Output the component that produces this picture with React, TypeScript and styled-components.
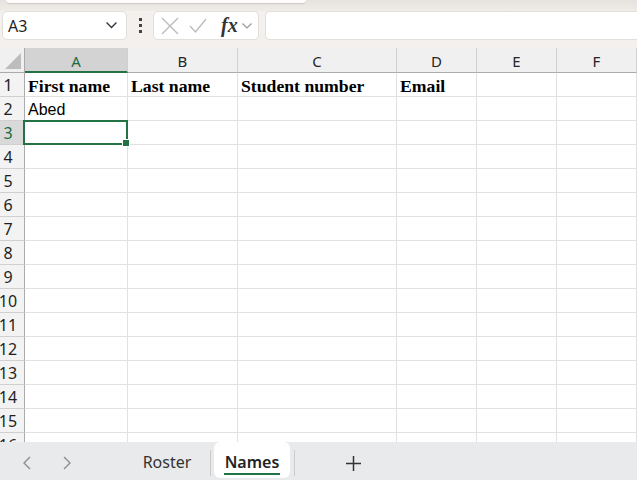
import React from 'react';
import styled, { createGlobalStyle } from 'styled-components';

const GlobalStyle = createGlobalStyle`
  html, body {
    margin: 0;
    padding: 0;
    background: #f3f0ed;
    overflow: hidden;
  }
  * {
    box-sizing: border-box;
  }
`;

const UI_FONT = `"Segoe UI", "Noto Sans", "Open Sans", sans-serif`;

const Page = styled.div`
  width: 637px;
  height: 480px;
  display: flex;
  flex-direction: column;
  font-family: ${UI_FONT};
  background: #f3f0ed;
  overflow: hidden;
`;

const TopStrip = styled.div`
  height: 11px;
  background: linear-gradient(#e6e2de, #efebe7);
  padding: 0 0 0 6px;
`;

const RibbonEdge = styled.div`
  width: 300px;
  height: 3px;
  background: #fdfcfb;
  border-radius: 0 0 4px 4px;
  box-shadow: 0 1px 1px rgba(0, 0, 0, 0.12);
`;

const FormulaBar = styled.div`
  height: 29px;
  display: flex;
  align-items: stretch;
  padding-left: 2px;
  margin-bottom: 8px;
`;

const NameBox = styled.div`
  width: 125px;
  background: #fff;
  border: 1px solid #e2deda;
  border-radius: 5px;
  display: flex;
  align-items: center;
  justify-content: space-between;
  padding: 0 9px 0 5px;
  font-size: 16px;
  color: #1f1f1f;
`;

const Dots = styled.div`
  width: 26px;
  display: flex;
  flex-direction: column;
  align-items: center;
  justify-content: center;
  gap: 3px;

  span {
    width: 3px;
    height: 3px;
    background: #444;
  }
`;

const FxBox = styled.div`
  width: 106px;
  background: #fff;
  border: 1px solid #e2deda;
  border-radius: 5px;
  display: flex;
  align-items: center;
  padding-left: 7px;
  gap: 10px;
`;

const FxLabel = styled.span`
  font-family: "Liberation Serif", "DejaVu Serif", serif;
  font-style: italic;
  font-weight: bold;
  font-size: 20px;
  color: #333;
  margin-left: 4px;
  margin-right: -6px;
`;

const FormulaInput = styled.div`
  flex: 1;
  margin-left: 6px;
  background: #fff;
  border: 1px solid #e2deda;
  border-right: none;
  border-radius: 5px 0 0 5px;
`;

const Sheet = styled.div`
  height: 394px;
  display: grid;
  grid-template-columns: 25px 103px 110px 159px 80px 80px 80px;
  grid-template-rows: 25px;
  grid-auto-rows: 24px;
  background: #fff;
  overflow: hidden;
  align-content: start;
`;

const Corner = styled.div`
  background: #f0f0f0;
  border-right: 1px solid #ababab;
  border-bottom: 1px solid #ababab;
  position: relative;

  &::after {
    content: '';
    position: absolute;
    right: 3px;
    bottom: 3px;
    width: 0;
    height: 0;
    border-left: 16px solid transparent;
    border-bottom: 16px solid #bdbdbd;
  }
`;

const ColHead = styled.div<{ $active?: boolean }>`
  background: ${(p) => (p.$active ? '#d3d3d3' : '#f0f0f0')};
  border-right: 1px solid #d0d0d0;
  border-bottom: ${(p) => (p.$active ? '2px solid #217346' : '1px solid #ababab')};
  display: flex;
  align-items: center;
  justify-content: center;
  padding-top: ${(p) => (p.$active ? '2px' : '1px')};
  font-size: 15px;
  color: ${(p) => (p.$active ? '#1c6b40' : '#262626')};
`;

const RowHead = styled.div<{ $active?: boolean }>`
  background: ${(p) => (p.$active ? '#d9d9d9' : '#f3f3f3')};
  border-right: ${(p) => (p.$active ? '2px solid #217346' : '1px solid #ababab')};
  border-bottom: 1px solid #d0d0d0;
  overflow: hidden;
  display: flex;
  align-items: center;
  padding-top: 1px;
  font-size: 16px;
  color: ${(p) => (p.$active ? '#1c6b40' : '#1f1f1f')};

  span {
    flex: none;
    width: 32px;
    margin-left: -8px;
    text-align: center;
  }
`;

const Cell = styled.div<{ $bold?: boolean; $selected?: boolean }>`
  position: relative;
  border-right: 1px solid #e1e1e1;
  border-bottom: 1px solid #e1e1e1;
  display: flex;
  align-items: center;
  padding: 3px 0 0 3px;
  white-space: nowrap;
  color: #000;
  font-family: ${(p) =>
    p.$bold ? '"Liberation Serif", "Times New Roman", serif' : '"Liberation Sans", Arial, sans-serif'};
  font-size: ${(p) => (p.$bold ? '17.7px' : '16px')};
  font-weight: ${(p) => (p.$bold ? 'bold' : 'normal')};

  ${(p) =>
    p.$selected &&
    `
    &::before {
      content: '';
      position: absolute;
      left: -2px;
      top: -1px;
      right: -1px;
      bottom: -1px;
      border: 2px solid #217346;
      z-index: 1;
    }
    &::after {
      content: '';
      position: absolute;
      right: -3px;
      bottom: -3px;
      width: 6px;
      height: 6px;
      background: #217346;
      border: 1px solid #fff;
      z-index: 2;
    }
  `}
`;

const TabBar = styled.div`
  flex: 1;
  background: #e8eaeb;
  display: flex;
  align-items: stretch;
  padding-left: 7px;
`;

const NavButton = styled.div`
  width: 40px;
  display: flex;
  align-items: center;
  justify-content: center;
  padding-top: 4px;
`;

const SheetTab = styled.div<{ $active?: boolean; $w: number }>`
  width: ${(p) => p.$w}px;
  display: flex;
  align-items: center;
  justify-content: center;
  position: relative;
  font-size: 16px;
  padding-top: 3px;
  color: ${(p) => (p.$active ? '#222' : '#333')};
  font-weight: ${(p) => (p.$active ? 600 : 400)};
  background: ${(p) => (p.$active ? '#fff' : 'transparent')};
  border-radius: ${(p) => (p.$active ? '6px' : '0')};
  margin-bottom: 2px;

  ${(p) =>
    p.$active &&
    `
    &::after {
      content: '';
      position: absolute;
      left: 10px;
      right: 10px;
      bottom: 3px;
      height: 2px;
      background: #217346;
    }
  `}
`;

const TabDivider = styled.div<{ $gap: number }>`
  width: 1px;
  align-self: center;
  height: 26px;
  margin: 4px ${(p) => p.$gap}px 0;
  background: #c9cbcc;
`;

const AddButton = styled.div`
  width: 40px;
  margin-left: 34px;
  display: flex;
  align-items: center;
  justify-content: center;
  padding-top: 4px;
`;

const Chevron = ({ size = 10, color = '#444' }: { size?: number; color?: string }) => (
  <svg width={size} height={size * 0.6} viewBox="0 0 10 6">
    <polyline points="0.5,0.5 5,5 9.5,0.5" fill="none" stroke={color} strokeWidth="1.2" />
  </svg>
);

const columns = ['A', 'B', 'C', 'D', 'E', 'F'];

const data: Record<number, { text: string; bold?: boolean }[]> = {
  1: [
    { text: 'First name', bold: true },
    { text: 'Last name', bold: true },
    { text: 'Student number', bold: true },
    { text: 'Email', bold: true },
  ],
  2: [{ text: 'Abed' }],
};

const rowNumbers = Array.from({ length: 16 }, (_, i) => i + 1);

export default function App() {
  return (
    <Page>
      <GlobalStyle />
      <TopStrip>
        <RibbonEdge />
      </TopStrip>

      <FormulaBar>
        <NameBox>
          <span>A3</span>
          <Chevron size={11} color="#333" />
        </NameBox>
        <Dots>
          <span />
          <span />
          <span />
        </Dots>
        <FxBox>
          <svg width="18" height="18" viewBox="0 0 18 18">
            <path d="M1 1 L17 17 M17 1 L1 17" stroke="#bcbcbc" strokeWidth="1.4" fill="none" />
          </svg>
          <svg width="18" height="16" viewBox="0 0 18 16">
            <polyline points="1,8 6.5,14 17,1" stroke="#bcbcbc" strokeWidth="1.4" fill="none" />
          </svg>
          <FxLabel>fx</FxLabel>
          <Chevron size={10} color="#999" />
        </FxBox>
        <FormulaInput />
      </FormulaBar>

      <Sheet>
        <Corner />
        {columns.map((c) => (
          <ColHead key={c} $active={c === 'A'}>
            {c}
          </ColHead>
        ))}
        {rowNumbers.map((r) => (
          <React.Fragment key={r}>
            <RowHead $active={r === 3}>
              <span>{r}</span>
            </RowHead>
            {columns.map((c, ci) => {
              const cell = data[r]?.[ci];
              return (
                <Cell key={c} $bold={cell?.bold} $selected={r === 3 && c === 'A'}>
                  {cell?.text}
                </Cell>
              );
            })}
          </React.Fragment>
        ))}
      </Sheet>

      <TabBar>
        <NavButton>
          <svg width="8" height="14" viewBox="0 0 8 14">
            <polyline points="7,1 1,7 7,13" fill="none" stroke="#8a8a8a" strokeWidth="1.3" />
          </svg>
        </NavButton>
        <NavButton>
          <svg width="8" height="14" viewBox="0 0 8 14">
            <polyline points="1,1 7,7 1,13" fill="none" stroke="#8a8a8a" strokeWidth="1.3" />
          </svg>
        </NavButton>
        <SheetTab $w={80} style={{ marginLeft: 40 }}>
          Roster
        </SheetTab>
        <TabDivider $gap={3} />
        <SheetTab $w={76} $active>
          Names
        </SheetTab>
        <TabDivider $gap={4} />
        <AddButton>
          <svg width="15" height="15" viewBox="0 0 15 15">
            <path d="M7.5 0 V15 M0 7.5 H15" stroke="#333" strokeWidth="1.5" fill="none" />
          </svg>
        </AddButton>
      </TabBar>
    </Page>
  );
}
